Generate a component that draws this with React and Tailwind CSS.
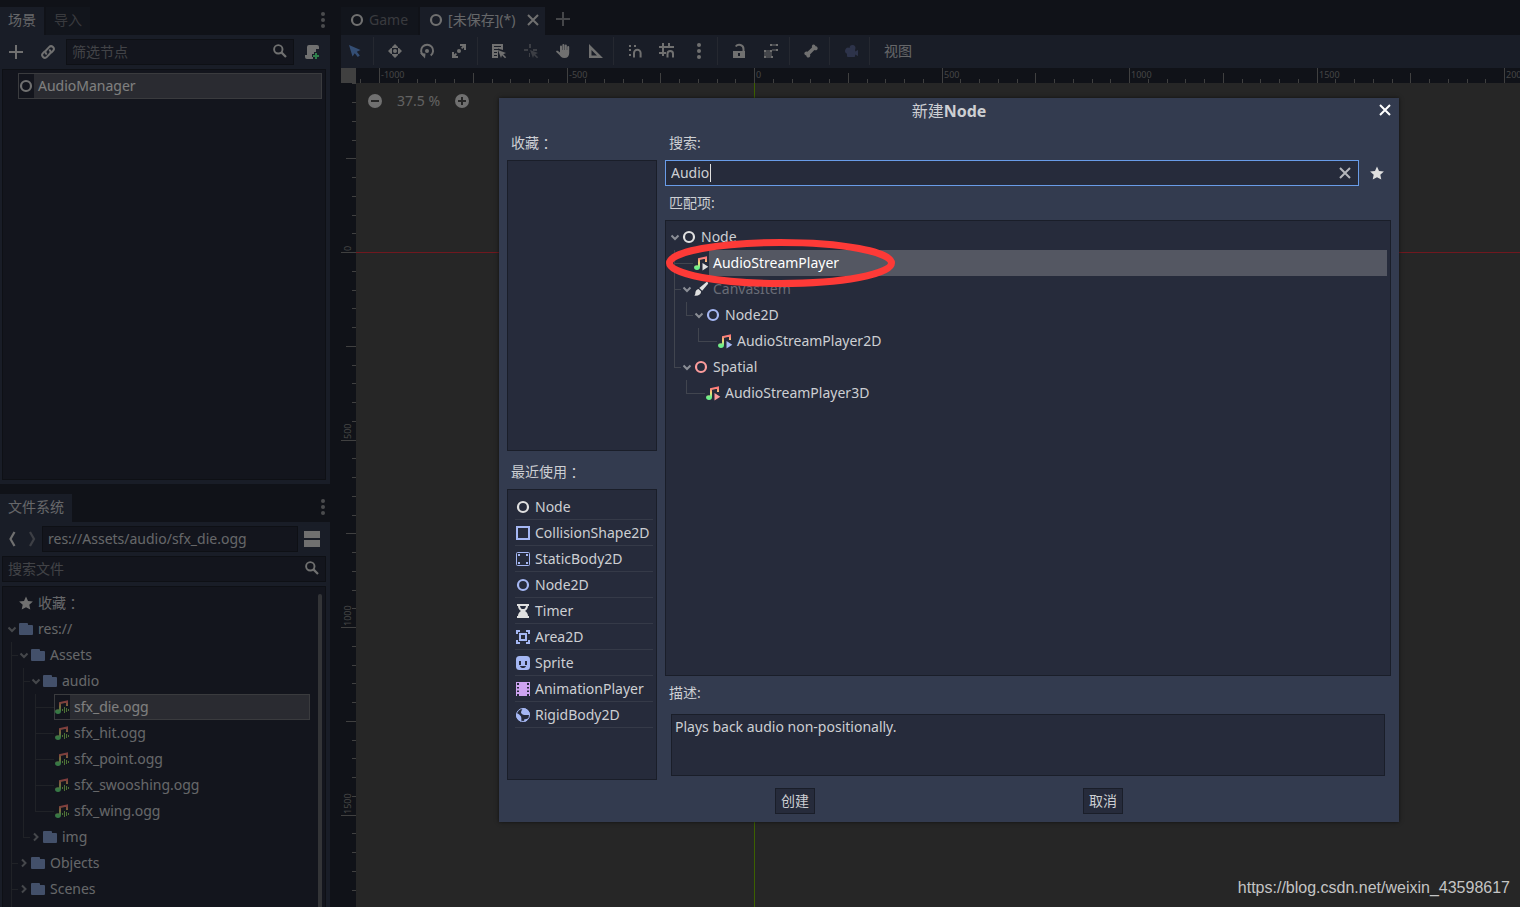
import { useId, useState } from "react"

const LIGHT = "#e0e0e0"
const BLUE = "#a5b7f3"
const RED = "#fc9c9c"
const FOLDER = "#86a1d4"

// ---------- ICONS (all on a 16px grid) ----------
function Icon({ children, className = "" }) {
  return (
    <svg viewBox="0 0 16 16" className={`size-4 shrink-0 ${className}`} fill={LIGHT} aria-hidden="true">
      {children}
    </svg>
  )
}

const NodeIcon = ({ color = LIGHT }) => (
  <Icon><circle cx="8" cy="8" r="5" fill="none" stroke={color} strokeWidth="2.2" /></Icon>
)

const AddIcon = ({ color = LIGHT }) => (
  <Icon><path fill={color} d="M7 1v6H1v2h6v6h2V9h6V7H9V1z" /></Icon>
)

const LinkIcon = () => (
  <Icon>
    <g fill="none" stroke={LIGHT} strokeWidth="2" strokeLinecap="round">
      <path d="M6.2 9.8a2.6 2.6 0 0 1 0-3.6l2.9-3.1a2.7 2.7 0 0 1 3.9 3.8l-1.4 1.5" />
      <path d="M9.8 6.2a2.6 2.6 0 0 1 0 3.6l-2.9 3.1A2.7 2.7 0 0 1 3 9.1l1.4-1.5" />
    </g>
  </Icon>
)

const SearchIcon = () => (
  <Icon>
    <circle cx="6.3" cy="6.3" r="4.2" fill="none" stroke={LIGHT} strokeWidth="1.9" />
    <path d="M9.4 9.4l4.6 4.6" stroke={LIGHT} strokeWidth="2.2" />
  </Icon>
)

const ScriptCreateIcon = () => (
  <Icon>
    <path d="M5 1a2 2 0 0 0-2 2v8H1v2a2 2 0 0 0 2 2h6v-2H8v-3h2V8h2V5h3V3a2 2 0 0 0-2-2z" />
    <path fill="#5fff97" d="M11 9h2v2h2v2h-2v2h-2v-2H9v-2h2z" />
  </Icon>
)

const DotsIcon = ({ color = LIGHT }) => (
  <Icon>
    <g fill={color}>
      <circle cx="8" cy="2" r="2" />
      <circle cx="8" cy="8" r="2" />
      <circle cx="8" cy="14" r="2" />
    </g>
  </Icon>
)

const CloseIcon = ({ color = LIGHT }) => (
  <Icon><path d="M3 3l10 10M13 3L3 13" stroke={color} strokeWidth="2" fill="none" /></Icon>
)

const StarIcon = () => (
  <Icon><path d="M8 1.5l2 4.4 4.9.5-3.6 3.3 1 4.9L8 12.2l-4.3 2.4 1-4.9L1.1 6.4 6 5.9z" /></Icon>
)

const FolderIcon = () => (
  <Icon><path fill={FOLDER} d="M2 2a1 1 0 0 0-1 1v10a1 1 0 0 0 1 1h12a1 1 0 0 0 1-1V5a1 1 0 0 0-1-1h-4V3a1 1 0 0 0-1-1z" /></Icon>
)

const SplitIcon = () => (
  <Icon><path d="M0 0h16v7H0zM0 9h16v7H0z" /></Icon>
)

function AudioIcon({ play, wave }) {
  const id = useId()
  return (
    <Icon>
      <defs>
        <linearGradient id={id} x1="0" y1="1" x2="0" y2="15" gradientUnits="userSpaceOnUse">
          <stop offset="0.15" stopColor="#ff7a7a" />
          <stop offset="0.5" stopColor="#f0dc78" />
          <stop offset="0.8" stopColor="#6df08a" />
        </linearGradient>
      </defs>
      <path d="M6 12V4l7-1.5V7" fill="none" stroke={`url(#${id})`} strokeWidth="2" />
      <ellipse cx="4" cy="12.6" rx="2.9" ry="2.3" fill={`url(#${id})`} />
      {play && <path d="M9.5 8v7.5l5.8-3.7z" fill={play} />}
      {wave && <path d="M8.5 10v2M10.5 8v6M12.5 9v4M14.5 10v2" stroke="#9be36b" fill="none" />}
    </Icon>
  )
}

const BrushIcon = () => (
  <Icon>
    <path d="M13.2 1.300c1.200-.8 2.600.6 1.700 1.700L9.200 9.800 6.300 6.900z" />
    <path d="M5.500 7.900l2.600 2.600c0 3-2.600 4.600-7.100 4.100 1.400-.8 1.200-1.500 1.400-3 .2-2 1.300-3.400 3.100-3.700z" />
  </Icon>
)

const CollisionIcon = () => (
  <Icon><path d="M2 2h12v12H2z" fill="none" stroke={BLUE} strokeWidth="2" /></Icon>
)

const StaticBodyIcon = () => (
  <Icon>
    <rect x="1.500" y="1.500" width="13" height="13" rx="1" fill="none" stroke={BLUE} />
    <path fill={BLUE} d="M3 3h2v2H3zM11 3h2v2h-2zM3 11h2v2H3zM11 11h2v2h-2z" />
  </Icon>
)

const TimerIcon = () => (
  <Icon><path fillRule="evenodd" d="M2 1h12v2h-1c0 2.500-1.500 4-3 5 1.500 1 3 2.500 3 5h1v2H2v-2h1c0-2.500 1.500-4 3-5-1.500-1-3-2.500-3-5H2zM5 3c.3 1.500 1 2.500 1.800 3h2.400C10 5.500 10.700 4.500 11 3z" /></Icon>
)

const AreaIcon = () => (
  <Icon>
    <path fill={BLUE} d="M1 1h4v2H3v2H1zM11 1h4v4h-2V3h-2zM1 11h2v2h2v2H1zM13 11h2v4h-4v-2h2z" />
    <path d="M5 5h6v6H5z" fill="none" stroke={BLUE} strokeWidth="2" />
  </Icon>
)

const SpriteIcon = () => (
  <Icon>
    <rect x="1" y="1" width="14" height="14" rx="3.500" fill={BLUE} />
    <path fill="#262b3b" d="M4 6h2v4H4zM10 6h2v4h-2zM5 11h6c-.5 1.500-1.500 2-3 2s-2.500-.5-3-2z" />
  </Icon>
)

const AnimationIcon = () => (
  <Icon>
    <path fill="#cea4f1" d="M1 1h1v14H1zM14 1h1v14h-1zM4 1h8v14H4zM2 1h2v1H2zM2 4h2v2H2zM2 7.500h2v2H2zM2 11h2v2H2zM12 1h2v1h-2zM12 4h2v2h-2zM12 7.500h2v2h-2zM12 11h2v2h-2z" />
  </Icon>
)

const RigidBodyIcon = () => (
  <Icon>
    <circle cx="8" cy="8" r="6.500" fill="none" stroke={BLUE} />
    <path fill={BLUE} d="M8 1a7 7 0 0 1 7 7h-4.500C8 8.500 6.500 7 6 5.500 6 4 7 3 8 1zM1.200 6.500C3 6 5 7.500 6 9.500c.5 1.500.5 3.500 0 5.200A7 7 0 0 1 1.200 6.500zM9 12.500l4.500-1A7 7 0 0 1 9.500 15z" />
  </Icon>
)

const CursorIcon = () => (
  <Icon><path fill="#699ce8" d="M2 2l3.500 11.500 2.300-3.200 3 3.700 2-1.600-3-3.700 3.700-1.700z" /></Icon>
)

const MoveIcon = () => (
  <Icon>
    <circle cx="8" cy="8" r="2" />
    <path d="M8 1L5 4v1h6V4zM8 15l-3-3v-1h6v1zM1 8l3-3h1v6H4zM15 8l-3-3h-1v6h1z" />
  </Icon>
)

const RotateIcon = () => (
  <Icon>
    <path d="M4.500 12.500A6 6 0 1 1 11.700 12.500" fill="none" stroke={LIGHT} strokeWidth="2" />
    <circle cx="8" cy="8" r="2" />
    <path d="M1 10l5.500.5-.5 5z" />
  </Icon>
)

const ScaleIcon = () => (
  <Icon>
    <circle cx="8" cy="8" r="2" />
    <path d="M9 1h6v6h-2V4.500L11.200 6 10 4.800 11.500 3H9zM7 15H1V9h2v2.500L4.800 10 6 11.200 4.500 13H7z" />
  </Icon>
)

const ListSelectIcon = () => (
  <Icon>
    <path fillRule="evenodd" d="M1 1h11v6L7 5.500V15H1zM3 3v1h7V3zM3 6v1h4V6zM3 9v1h3V9zM3 12v1h3v-1z" />
    <path d="M7 7l8 3-2.800 1.200 3 3-1.200 1-3-3L10 15z" />
  </Icon>
)

const PivotIcon = () => (
  <Icon className="opacity-40">
    <path d="M6 1h2v4H6zM1 6h4v2H1zM10 6h4v2h-4zM6 10h1v4H6zM7 7l8 3-2.800 1.200 3 3-1.200 1-3-3L10 15z" />
  </Icon>
)

const HandIcon = () => (
  <Icon>
    <path d="M5 3.500a1 1 0 0 1 2 0V7h.4V2a1 1 0 0 1 2 0v5h.4V2.500a1 1 0 0 1 2 0V7h.4V4a1 1 0 0 1 2 0v6c0 3-1.700 5-4.700 5-3 0-4-1.500-5-3L1.300 9c-.6-1.200.8-1.800 1.700-1L5 9.500z" />
  </Icon>
)

const RulerIcon = () => (
  <Icon><path fillRule="evenodd" d="M2 1v14h14zM4.500 7v5.500H10z" /></Icon>
)

const SnapIcon = () => (
  <Icon>
    <path d="M2 2h2v2H2zM2 6h2v2H2zM7 2h2v2H7zM2 11h2v2H2z" />
    <path d="M7 14.500V10a3.300 3.300 0 0 1 6.600 0v4.500" fill="none" stroke={LIGHT} strokeWidth="2" />
  </Icon>
)

const GridSnapIcon = () => (
  <Icon>
    <path d="M3 0h2v3h4V0h2v3h4v2H5v4h2v2H5v2H3v-2H0V9h3V5H0V3h3z" />
    <path d="M8.500 14.500v-3.700a2.700 2.700 0 0 1 5.500 0v3.700" fill="none" stroke={LIGHT} strokeWidth="2" />
  </Icon>
)

const UnlockIcon = () => (
  <Icon>
    <path d="M4.700 3.500C7 .5 12.500 1.500 12.500 6v2" fill="none" stroke={LIGHT} strokeWidth="2" />
    <path fillRule="evenodd" d="M2 8h12v7H2zM7 10v3h2v-3z" />
  </Icon>
)

const GroupIcon = () => (
  <Icon>
    <path d="M7 1h2v2H7zM13 1h2v2h-2zM13 6h2v2h-2zM1 7h2v2H1zM7 7h2v2H7zM1 13h2v2H1zM8 13h2v2H8z" />
    <path d="M3 7h4v2h2v4H8v2H3v-2H1V9h2zM9 1h4v2H9zM9 6h4v2H9z" opacity=".5" />
  </Icon>
)

const BoneIcon = () => (
  <Icon><path d="M10.500 1.500a2 2 0 0 1 2 1.800 2 2 0 0 1 1.600 3.400c-.8.800-2 .700-2.700.3L7 11.500c.4.800.3 1.900-.4 2.600a2 2 0 0 1-3.300-1.600 2 2 0 0 1-1.500-3.300c.8-.8 1.900-.8 2.700-.4L9 4.400c-.4-1.400.2-2.700 1.500-2.900z" /></Icon>
)

const CameraIcon = () => (
  <Icon>
    <path fill="#5b6695" d="M9.500 2a3 3 0 0 1 2.600 4.500v2L15 7v6l-2.900-1.500V13a1 1 0 0 1-1 1H5a1 1 0 0 1-1-1v-2.200A3 3 0 1 1 6.600 5 3 3 0 0 1 9.500 2z" />
  </Icon>
)

const ZoomIcon = ({ plus }) => (
  <Icon>
    <circle cx="8" cy="8" r="7" />
    <path fill="#4c4c4c" d={plus ? "M7 4h2v3h3v2H9v3H7V9H4V7h3z" : "M4 7h8v2H4z"} />
  </Icon>
)

const ArrowIcon = ({ open }) => (
  <svg viewBox="0 0 12 16" className="h-4 w-3 shrink-0" fill="none" stroke="#8b8e96" strokeWidth="2" aria-hidden="true">
    <path d={open ? "M2.500 6.500L6 10l3.500-3.500" : "M4 4.500L7.500 8 4 11.500"} />
  </svg>
)

// ---------- TREE ----------
// guides: "|" passes through, "T" branches, "L" ends a branch, " " is blank
function Guide({ type, last }) {
  if (type === " ") return <span className="w-3 shrink-0" />
  const branch = type !== "|"
  return (
    <span className="flex w-3 shrink-0 flex-col self-stretch pl-[5px]">
      <span className={`h-3.5 border-l border-[#41454f] ${branch && last ? "border-b" : ""}`} />
      <span className={`flex-1 ${type === "L" ? "" : "border-l border-[#41454f]"}`} />
    </span>
  )
}

function TreeRow({ guides = "", arrow, icon, label, selected, dim, framed }) {
  return (
    <li className="flex h-[26px] items-center" role="treeitem" aria-selected={!!selected}>
      {guides.split("").map((g, i) => <Guide key={i} type={g} last={i === guides.length - 1} />)}
      {arrow
        ? <ArrowIcon open={arrow === "open"} />
        : <span className={`h-px w-3 shrink-0 ${guides ? "bg-[#41454f]" : ""}`} />}
      <span
        className={`flex h-full flex-1 items-center ${framed ? "outline outline-1 -outline-offset-1 outline-[#74767c]" : ""}`}
      >
        {icon}
        <span
          className={`flex h-full flex-1 items-center whitespace-nowrap pl-1 ${selected ? "bg-[#545762] text-white" : dim ? "text-[#696c76]" : ""}`}
        >
          {label}
        </span>
      </span>
    </li>
  )
}

const files = [
  { arrow: "open", icon: <FolderIcon />, label: "res://" },
  { guides: "T", arrow: "open", icon: <FolderIcon />, label: "Assets" },
  { guides: "|T", arrow: "open", icon: <FolderIcon />, label: "audio" },
  { guides: "||T", icon: <AudioIcon wave />, label: "sfx_die.ogg", selected: true, framed: true },
  { guides: "||T", icon: <AudioIcon wave />, label: "sfx_hit.ogg" },
  { guides: "||T", icon: <AudioIcon wave />, label: "sfx_point.ogg" },
  { guides: "||T", icon: <AudioIcon wave />, label: "sfx_swooshing.ogg" },
  { guides: "||L", icon: <AudioIcon wave />, label: "sfx_wing.ogg" },
  { guides: "|L", arrow: "closed", icon: <FolderIcon />, label: "img" },
  { guides: "T", arrow: "closed", icon: <FolderIcon />, label: "Objects" },
  { guides: "T", arrow: "closed", icon: <FolderIcon />, label: "Scenes" },
]

const matches = [
  { arrow: "open", icon: <NodeIcon />, label: "Node" },
  { guides: "T", icon: <AudioIcon play={LIGHT} />, label: "AudioStreamPlayer", selected: true },
  { guides: "T", arrow: "open", icon: <BrushIcon />, label: "CanvasItem", dim: true },
  { guides: "|L", arrow: "open", icon: <NodeIcon color={BLUE} />, label: "Node2D" },
  { guides: "| L", icon: <AudioIcon play={BLUE} />, label: "AudioStreamPlayer2D" },
  { guides: "L", arrow: "open", icon: <NodeIcon color={RED} />, label: "Spatial" },
  { guides: " L", icon: <AudioIcon play={RED} />, label: "AudioStreamPlayer3D" },
]

const recent = [
  { icon: <NodeIcon />, label: "Node" },
  { icon: <CollisionIcon />, label: "CollisionShape2D" },
  { icon: <StaticBodyIcon />, label: "StaticBody2D" },
  { icon: <NodeIcon color={BLUE} />, label: "Node2D" },
  { icon: <TimerIcon />, label: "Timer" },
  { icon: <AreaIcon />, label: "Area2D" },
  { icon: <SpriteIcon />, label: "Sprite" },
  { icon: <AnimationIcon />, label: "AnimationPlayer" },
  { icon: <RigidBodyIcon />, label: "RigidBody2D" },
]

const tools = [
  { icon: <CursorIcon />, name: "选择" },
  null,
  { icon: <MoveIcon />, name: "移动" },
  { icon: <RotateIcon />, name: "旋转" },
  { icon: <ScaleIcon />, name: "缩放" },
  null,
  { icon: <ListSelectIcon />, name: "列表选择" },
  { icon: <PivotIcon />, name: "轴心" },
  { icon: <HandIcon />, name: "平移" },
  { icon: <RulerIcon />, name: "标尺" },
  null,
  { icon: <SnapIcon />, name: "智能吸附" },
  { icon: <GridSnapIcon />, name: "栅格吸附" },
  { icon: <DotsIcon />, name: "吸附选项" },
  null,
  { icon: <UnlockIcon />, name: "锁定" },
  { icon: <GroupIcon />, name: "分组" },
  null,
  { icon: <BoneIcon />, name: "骨骼" },
  null,
  { icon: <CameraIcon />, name: "相机" },
  null,
]

// full-width colon, centred in its box
const Colon = () => <span className="font-['Noto_Sans_CJK_TC',sans-serif]">：</span>

const field = "h-[26px] min-w-0 border border-[#1c202b] bg-[#262b3b] px-[5px] pb-0.5 outline-none placeholder:text-[#84868e]"

// ---------- DOCKS ----------
function SceneDock() {
  return (
    <section className="flex h-[477px] shrink-0 flex-col">
      <div className="flex h-7 items-stretch gap-0.5">
        <button className="bg-[#333b4f] px-2 pb-0.5">场景</button>
        <button className="bg-[#252a38] px-2 pb-0.5 text-[#72757d]">导入</button>
        <button className="-mr-px ml-auto pb-0.5" aria-label="菜单"><DotsIcon color="#95979b" /></button>
      </div>
      <div className="flex flex-1 flex-col gap-1 bg-[#333b4f] py-1 pl-0.5 pr-1">
        <div className="flex items-center gap-1">
          <button className="grid h-[26px] w-7 shrink-0 place-items-center" aria-label="添加节点"><AddIcon /></button>
          <button className="grid h-[26px] w-7 shrink-0 place-items-center" aria-label="实例化"><LinkIcon /></button>
          <div className="relative flex min-w-0 flex-1">
            <input className={`${field} flex-1 pr-7`} placeholder="筛选节点" aria-label="筛选节点" />
            <span className="absolute right-1.5 top-1"><SearchIcon /></span>
          </div>
          <button className="grid h-[26px] w-7 shrink-0 place-items-center" aria-label="添加脚本"><ScriptCreateIcon /></button>
        </div>
        <ul className="flex-1 border border-[#1c202b] bg-[#262b3b] p-[3px]" role="tree">
          <TreeRow icon={<NodeIcon />} label="AudioManager" selected framed />
        </ul>
      </div>
    </section>
  )
}

function FileDock() {
  return (
    <section className="flex min-h-0 flex-1 flex-col">
      <div className="flex h-7 shrink-0 items-stretch">
        <button className="bg-[#333b4f] px-2 pb-0.5">文件系统</button>
        <button className="-mr-px ml-auto pb-0.5" aria-label="菜单"><DotsIcon color="#95979b" /></button>
      </div>
      <div className="flex min-h-0 flex-1 flex-col gap-1 bg-[#333b4f] pl-0.5 pr-1 pt-1">
        <div className="flex items-center">
          <button className="w-5 shrink-0" aria-label="后退">
            <Icon className="mx-auto"><path d="M10.500 1L6.500 8l4 7" fill="none" stroke={LIGHT} strokeWidth="2.2" /></Icon>
          </button>
          <button className="w-5 shrink-0" aria-label="前进">
            <Icon className="mx-auto"><path d="M6 1l4 7-4 7" fill="none" stroke="#7b7f8a" strokeWidth="2.2" /></Icon>
          </button>
          <input className={`${field} flex-1`} defaultValue="res://Assets/audio/sfx_die.ogg" aria-label="路径" />
          <button className="px-1.5" aria-label="切换分栏"><SplitIcon /></button>
        </div>
        <div className="relative flex">
          <input className={`${field} flex-1 pr-7`} placeholder="搜索文件" aria-label="搜索文件" />
          <span className="absolute right-1.5 top-1"><SearchIcon /></span>
        </div>
        <div className="flex min-h-0 flex-1 gap-2 overflow-hidden border border-b-0 border-[#1c202b] bg-[#262b3b] p-[3px] pb-0">
          <ul className="flex flex-1 flex-col" role="tree">
            <TreeRow icon={<StarIcon />} label={<>收藏<Colon /></>} />
            {files.map(f => <TreeRow key={f.label} {...f} />)}
            <li className="ml-[5px] flex-1 border-l border-[#41454f]" aria-hidden="true" />
          </ul>
          <div className="mt-1 w-1 rounded-t bg-[#66686e]" />
        </div>
      </div>
    </section>
  )
}

// ---------- CANVAS ----------
const STEP = 18.75 // px between minor ticks
const ORIGIN = { x: 398, y: 169 }

function Ruler({ vertical }) {
  const start = vertical ? ORIGIN.y : ORIGIN.x
  const ticks = Array.from({ length: 160 }, (_, i) => i - 25)
  const labels = vertical ? [0, 500, 1000, 1500] : [-1000, -500, 0, 500, 1000, 1500, 2000]

  return (
    <svg className={`block overflow-hidden bg-[#202531] ${vertical ? "h-full w-[15px]" : "h-[15px] w-full"}`}>
      {ticks.map(n => {
        const p = Math.round(start + n * STEP)
        const size = n % 10 === 0 ? 15 : n % 5 === 0 ? 10 : 4
        return vertical
          ? <rect key={n} x={15 - size} y={p} width={size} height="1" fill="#808080" />
          : <rect key={n} x={p} y={15 - size} width="1" height={size} fill="#808080" />
      })}
      {labels.map(n => {
        const p = Math.round(start + (n / 50) * STEP)
        return (
          <text
            key={n}
            className="text-[9px]"
            fill="#8a8a8a"
            x={vertical ? 0 : p + 2}
            y={vertical ? 0 : 10}
            transform={vertical ? `translate(10 ${p - 1}) rotate(-90)` : undefined}
          >
            {n}
          </text>
        )
      })}
    </svg>
  )
}

function Canvas() {
  return (
    <div className="grid min-h-0 flex-1 grid-cols-[15px_1fr] grid-rows-[15px_1fr]">
      <div className="bg-[#808080]" />
      <Ruler />
      <Ruler vertical />
      <div className="relative overflow-hidden bg-[#4d4d4d]">
        <svg className="absolute inset-0 size-full" aria-hidden="true">
          <rect x="0" y={ORIGIN.y} width="100%" height="1" fill="#e0303e" />
          <rect x={ORIGIN.x} y="0" width="1" height="100%" fill="#78c000" />
        </svg>
        <div className="relative flex items-center gap-3.5 px-[11px] py-2 text-[#c4c4c4]">
          <button aria-label="缩小"><ZoomIcon /></button>
          <button>37.5 %</button>
          <button aria-label="放大"><ZoomIcon plus /></button>
        </div>
      </div>
    </div>
  )
}

function Workspace() {
  return (
    <main className="flex min-w-0 flex-1 flex-col pl-px">
      <div className="flex h-7 shrink-0 items-stretch gap-0.5">
        <button className="flex items-center gap-1 bg-[#252a38] pb-0.5 pl-2 pr-2.5 text-[#72757d]"><NodeIcon />Game</button>
        <div className="flex items-center bg-[#333b4f] pb-0.5 pl-2 pr-1">
          <button className="flex items-center gap-1"><NodeIcon />[未保存](*)</button>
          <button className="ml-2.5" aria-label="关闭标签"><CloseIcon /></button>
        </div>
        <button className="ml-2 pb-1" aria-label="新建标签"><AddIcon color="#8b8d92" /></button>
      </div>
      <div className="flex h-[33px] shrink-0 items-start gap-1 bg-[#333b4f] pt-0.5">
        {tools.map((t, i) => t
          ? <button key={i} className="grid h-7 w-7 place-items-center" aria-label={t.name}>{t.icon}</button>
          : <span key={i} className="h-7 w-1 shrink-0 border-l border-[#4a5061]" />
        )}
        <button className="h-7 px-[7px]">视图</button>
      </div>
      <Canvas />
    </main>
  )
}

// ---------- DIALOG ----------
const box = "border border-[#1a1e29] bg-[#262b3b]"

function CreateDialog() {
  const [query, setQuery] = useState("Audio")

  return (
    <div
      className="flex min-h-0 flex-1 flex-col bg-[#333b4f] px-2 pb-2 shadow-[0_0_4px_rgba(0,0,0,0.6)]"
      role="dialog"
      aria-labelledby="dialog-title"
    >
      <header className="relative flex h-[34px] items-start justify-center">
        <h1 id="dialog-title" className="flex h-[26px] items-center text-base">新建<b>Node</b></h1>
        <button className="absolute -right-0.5 top-1" aria-label="关闭"><CloseIcon color="#fff" /></button>
      </header>

      <div className="flex min-h-0 flex-1 gap-2">
        <div className="flex w-[150px] shrink-0 flex-col">
          <h2 className="mb-1.5 flex h-[22px] items-center pl-1">收藏<Colon /></h2>
          <div className={`${box} flex-1 px-[7px] py-1`} />
          <h2 className="mb-1.5 mt-2.5 flex h-[22px] items-center pl-1">最近使用<Colon /></h2>
          <ul className={`${box} flex-1 px-[7px] py-1`}>
            {recent.map(r => (
              <li key={r.label} className="-mr-1 flex h-[26px] items-center gap-1 whitespace-nowrap border-b border-[#353a48]">
                {r.icon}{r.label}
              </li>
            ))}
          </ul>
        </div>

        <div className="flex min-w-0 flex-1 flex-col">
          <label htmlFor="search" className="mb-1.5 flex h-[22px] items-center pl-1">搜索:</label>
          <div className="flex items-center gap-1">
            <div className="relative flex min-w-0 flex-1">
              <input
                id="search"
                className="h-[26px] min-w-0 flex-1 border border-[#699ce8] bg-[#262b3b] px-[5px] pb-0.5 caret-transparent outline-none"
                value={query}
                onChange={e => setQuery(e.target.value)}
              />
              <span className="absolute left-[45px] top-1 h-[18px] w-px bg-[#e0e0e0]" />
              <button className="absolute right-1.5 top-[5px]" aria-label="清除" onClick={() => setQuery("")}>
                <CloseIcon color="#b4b6bb" />
              </button>
            </div>
            <button className="grid h-[26px] w-7 shrink-0 place-items-center" aria-label="收藏"><StarIcon /></button>
          </div>

          <h2 className="my-1.5 flex h-[22px] items-center pl-1">匹配项:</h2>
          <div className={`${box} relative min-h-0 flex-1 p-[3px]`}>
            <ul role="tree">
              {matches.map(m => <TreeRow key={m.label} {...m} />)}
            </ul>
            <svg className="absolute left-0 top-[18px] h-12 w-[229px]" viewBox="0 0 229 48" aria-hidden="true">
              <ellipse cx="114.500" cy="24" rx="111" ry="20.500" fill="none" stroke="#fd3a37" strokeWidth="7" />
            </svg>
          </div>

          <h2 className="mb-2.5 mt-1.5 flex h-[22px] items-center pl-1">描述:</h2>
          <p className={`${box} mx-1.5 mb-1 h-[62px] px-[3px] pt-0.5`}>Plays back audio non-positionally.</p>
        </div>
      </div>

      <footer className="mt-2 flex justify-evenly">
        <button className={`${box} h-[26px] px-[5px]`}>创建</button>
        <button className={`${box} h-[26px] px-[5px]`}>取消</button>
      </footer>
    </div>
  )
}

export default function App() {
  return (
    <div className="relative flex h-screen gap-2.5 overflow-hidden bg-[#202531] pt-[7px] font-['Noto_Sans','Noto_Sans_CJK_SC',sans-serif] text-sm text-[#cdcfd3]">
      <aside className="flex w-[330px] shrink-0 flex-col gap-2.5">
        <SceneDock />
        <FileDock />
      </aside>
      <Workspace />

      <div className="absolute inset-0 flex bg-black/50 pb-[85px] pl-[499px] pr-[121px] pt-[98px]">
        <CreateDialog />
      </div>
      <a
        href="https://blog.csdn.net/weixin_43598617"
        className="absolute bottom-[7px] right-2.5 font-['Liberation_Sans',sans-serif] text-base text-[#c4c4c4]"
      >
        https://blog.csdn.net/weixin_43598617
      </a>
    </div>
  )
}
